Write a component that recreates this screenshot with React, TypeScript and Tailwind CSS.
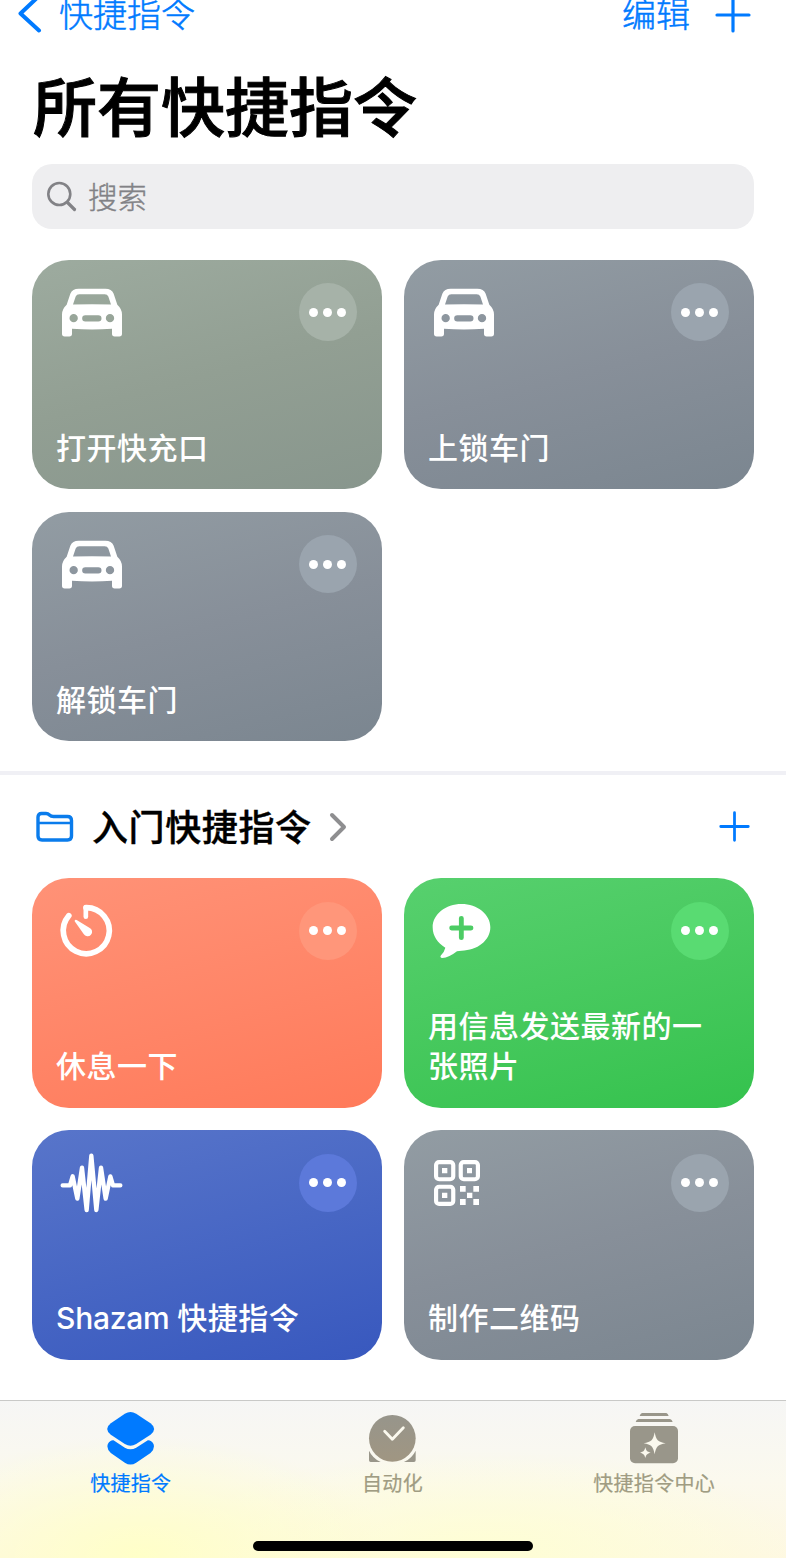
import type { ReactNode } from 'react';

type Shortcut = {
  app?: string;
  title: string;
  icon: ReactNode;
  background: string;
  badge: string;
};

const GRAY = 'bg-linear-165 from-[#929ca3] via-[#878f99] to-[#7b8690]';
const SAGE = 'bg-linear-165 from-[#9dab9f] via-[#929f93] to-[#88968d]';
const CORAL = 'bg-linear-165 from-[#ff9277] to-[#ff7a5a]';
const GREEN = 'bg-linear-165 from-[#57d06e] to-[#34c24d]';
const BLUE = 'bg-linear-165 from-[#5875ca] to-[#3858be]';

function CarIcon() {
  return (
    <svg viewBox="108 88.5 216 192" className="w-[72px] h-16" fill="white">
      <path
        fillRule="evenodd"
        d="M176 115H256Q275 115 281 130L292 163Q306 176 306 192V250Q306 258 298 258H284Q276 258 276 250V235Q216 239 156 235V250Q156 258 148 258H134Q126 258 126 250V192Q126 176 140 163L151 130Q157 115 176 115ZM159 162L167 138Q170 131 178 131H254Q262 131 265 138L273 162Q216 160 159 162ZM148.500 203a12.500 12.500 0 1 0 25 0a12.500 12.500 0 1 0 -25 0ZM257.500 203a12.500 12.500 0 1 0 25 0a12.500 12.500 0 1 0 -25 0ZM196 194H235a9.500 9.500 0 0 1 0 19H196a9.500 9.500 0 0 1 0 -19Z"
      />
    </svg>
  );
}

function TimerIcon() {
  return (
    <svg viewBox="168 414 216 192" className="w-[72px] h-16" fill="none" stroke="white" strokeLinecap="round">
      <path d="M258 443A69 69 0 1 1 206.500 467" strokeWidth="17" />
      <path d="M257.500 442V470" strokeWidth="14" />
      <path d="M224 484Q223 478 230 480L268 503A13.500 13.500 0 1 1 251 522Z" fill="white" stroke="none" />
    </svg>
  );
}

function MessageIcon() {
  return (
    <svg viewBox="84 114 216 192" className="w-[72px] h-16">
      <path
        fill="white"
        d="M184.500 132C232 132 271 163 271 202S232 272 184.500 272Q177 272 171 274Q147 293 127 294Q118 293 123 286Q133 276 136 263C113 250 98 228 98 202C98 163 137 132 184.500 132Z"
      />
      <path d="M184 175V233M155 204H213" stroke="#4ccc64" strokeWidth="14.500" strokeLinecap="round" />
    </svg>
  );
}

function WaveformIcon() {
  return (
    <svg viewBox="108 90 216 192" className="w-[72px] h-16" fill="none">
      <path
        d="M128 196H150L158 169L172 236L186 143L200 270L214 107L229 270L243 143L257 236L271 169L279 196H301"
        stroke="white"
        strokeWidth="13"
        strokeLinecap="round"
        strokeLinejoin="round"
      />
    </svg>
  );
}

function QrIcon() {
  return (
    <svg viewBox="84 90 216 192" className="w-[72px] h-16" fill="white">
      <g fill="none" stroke="white" strokeWidth="12.500">
        <rect x="108.250" y="126.250" width="51.500" height="51.500" rx="9" />
        <rect x="182.250" y="126.250" width="51.500" height="51.500" rx="9" />
        <rect x="108.250" y="200.250" width="51.500" height="51.500" rx="9" />
      </g>
      <path d="M126 144h16v16h-16zM201 144h15v16h-15zM126 218h16v16h-16zM180 198h17v17h-17zM220 198h17v17h-17zM201 218h16v16h-16zM180 237h17v18h-17zM220 237h17v18h-17z" />
    </svg>
  );
}

function PlusIcon({ className }: { className: string }) {
  return (
    <svg viewBox="0 0 36 36" className={className} fill="none" stroke="#007aff" strokeLinecap="round">
      <path d="M18 2V34M2 18H34" strokeWidth="3.200" />
    </svg>
  );
}

function ShortcutsTabIcon() {
  return (
    <svg viewBox="317.5 90 150 168" className="w-[50px] h-14" fill="#007aff">
      <path d="M374 101Q391 91 408 101L451 130Q473 147 451 164L408 192Q391 202 374 192L332 164Q310 147 332 130Z" />
      <path d="M340 181L374 203Q391 212 408 203L443 181Q453 180 460 192Q465 207 451 219L408 248Q391 259 374 248L332 219Q318 207 323 192Q330 180 340 181Z" />
    </svg>
  );
}

function AutomationTabIcon() {
  return (
    <svg viewBox="-56 90 150 168" className="w-[50px] h-14">
      <defs>
        <linearGradient id="automation" x1="0" y1="0" x2="0" y2="1">
          <stop offset="0" stopColor="#97958b" />
          <stop offset="1" stopColor="#a09682" />
        </linearGradient>
      </defs>
      <circle cx="20" cy="175" r="70" fill="url(#automation)" />
      <path d="M90 212V241Q90 246 85 246H55Q79 235 90 212ZM-50 212V241Q-50 246 -45 246H-15Q-39 235 -50 212Z" fill="#99968a" />
      <path d="M-3 154L20 178L53 143" fill="none" stroke="#fbf9ee" strokeWidth="8.500" strokeLinecap="round" strokeLinejoin="round" />
    </svg>
  );
}

function GalleryTabIcon() {
  return (
    <svg viewBox="730 90 150 168" className="w-[50px] h-14" fill="#99968a">
      <path d="M769 99H842Q847 100 849 108H762Q764 100 769 99ZM758 117H853Q859 118 861 126H750Q752 118 758 117Z" />
      <rect x="733" y="138" width="144" height="112" rx="15" />
      <path
        fill="#fbf9ee"
        d="M807 157C811 180 817 186 840 190C817 194 811 200 807 223C803 200 797 194 774 190C797 186 803 180 807 157ZM779 202C782 213 784 215 795 218C784 221 782 223 779 234C776 223 774 221 763 218C774 215 776 213 779 202Z"
      />
    </svg>
  );
}

const allShortcuts: Shortcut[] = [
  { title: '打开快充口', icon: <CarIcon />, background: SAGE, badge: 'bg-[#a6b2a8]' },
  { title: '上锁车门', icon: <CarIcon />, background: GRAY, badge: 'bg-[#9aa4ae]' },
  { title: '解锁车门', icon: <CarIcon />, background: GRAY, badge: 'bg-[#9aa4ae]' },
];

const starterShortcuts: Shortcut[] = [
  { title: '休息一下', icon: <TimerIcon />, background: CORAL, badge: 'bg-[#ff967a]' },
  { title: '用信息发送最新的一张照片', icon: <MessageIcon />, background: GREEN, badge: 'bg-[#59db72]' },
  { app: 'Shazam', title: '快捷指令', icon: <WaveformIcon />, background: BLUE, badge: 'bg-[#5c79da]' },
  { title: '制作二维码', icon: <QrIcon />, background: GRAY, badge: 'bg-[#9aa4ae]' },
];

const tabs = [
  { label: '快捷指令', icon: <ShortcutsTabIcon />, color: 'text-[#007aff]' },
  { label: '自动化', icon: <AutomationTabIcon />, color: 'text-[#a09c82]' },
  { label: '快捷指令中心', icon: <GalleryTabIcon />, color: 'text-[#a09c82]' },
];

function ShortcutCard({ app, title, icon, background, badge }: Shortcut) {
  return (
    <div className={`flex flex-col justify-between rounded-[37px] pl-6 pr-[25.5px] pb-[21.5px] ${background}`}>
      <div className="flex justify-between">
        <div className="pt-5">{icon}</div>
        <button className={`mt-[23.5px] flex size-[58px] items-center justify-center gap-[5px] rounded-full ${badge}`}>
          <span className="size-[9px] rounded-full bg-white" />
          <span className="size-[9px] rounded-full bg-white" />
          <span className="size-[9px] rounded-full bg-white" />
        </button>
      </div>
      <h3 className="w-[280px] text-[30px] leading-10 tracking-[0.5px] font-medium text-white">
        {app && <span className="tracking-[-0.25px]">{app} </span>}
        {title}
      </h3>
    </div>
  );
}

function ShortcutGrid({ items }: { items: Shortcut[] }) {
  return (
    <div className="grid grid-cols-2 auto-rows-[229.5px] gap-x-[22px] gap-y-[22.5px] px-8">
      {items.map((item) => (
        <ShortcutCard key={item.title} {...item} />
      ))}
    </div>
  );
}

export default function App() {
  return (
    <div className="flex h-[1558px] w-[786px] flex-col overflow-hidden bg-white font-['Inter','Noto_Sans_CJK_SC',sans-serif]">
      <header className="flex h-[30px] shrink-0 items-center justify-between pl-[17px] pr-[35px] text-[34px] leading-[30px] text-[#007aff]">
        <div className="flex items-center gap-[17px]">
          <svg viewBox="0 0 25 40" className="h-10 w-[25px]" fill="none">
            <path d="M22 1L3.500 18.500L22 35.500" stroke="#007aff" strokeWidth="4" strokeLinecap="round" strokeLinejoin="round" />
          </svg>
          <span className="font-light [-webkit-text-stroke:0.5px_#007aff]">快捷指令</span>
        </div>
        <div className="flex items-center gap-[25px]">
          <span className="font-light [-webkit-text-stroke:0.5px_#007aff]">编辑</span>
          <PlusIcon className="size-9" />
        </div>
      </header>

      <h1 className="mt-[38px] h-20 shrink-0 pl-[33px] text-[64px] leading-[80px] font-medium text-black [-webkit-text-stroke:1px_black]">
        所有快捷指令
      </h1>

      <div className="mx-8 mt-[16px] flex h-[65px] shrink-0 items-center rounded-[20px] bg-[#eeeef0] pl-[14px] text-[#828286]">
        <svg viewBox="0 0 32 32" className="size-8" fill="none" stroke="#828286" strokeLinecap="round">
          <circle cx="13.300" cy="13" r="11" strokeWidth="2.600" />
          <path d="M21.500 21.500L28.500 28.500" strokeWidth="3.200" />
        </svg>
        <span className="ml-[10px] pt-px text-[29.5px] font-light [-webkit-text-stroke:0.4px_#828286]">搜索</span>
      </div>

      <section className="mt-[30.5px] shrink-0">
        <ShortcutGrid items={allShortcuts} />
      </section>

      <div className="mt-[30px] h-1 shrink-0 bg-[#f0f0f5]" />

      <section className="shrink-0">
        <div className="flex h-[103px] items-center justify-between pl-[35px] pr-[36px]">
          <div className="flex items-center">
            <svg viewBox="0 0 40 32" className="h-8 w-10" fill="none" stroke="#0a7cec" strokeWidth="3.400">
              <path d="M3 6Q3 2.500 6.500 2.500H11Q13 2.500 14.500 4Q16 5.500 18.500 5.500H32.500Q36.500 5.500 36.500 9.500V25Q36.500 29 32.500 29H7Q3 29 3 25Z" />
              <path d="M3 12H36.500" strokeWidth="2.600" />
            </svg>
            <h2 className="ml-[17px] pt-0.5 text-[36px] tracking-[0.6px] font-medium text-black [-webkit-text-stroke:0.4px_black]">
              入门快捷指令
            </h2>
            <svg viewBox="0 0 20 30" className="ml-4 h-[30px] w-5" fill="none">
              <path d="M4 3L16 15L4 27" stroke="#8e8e90" strokeWidth="4" strokeLinecap="round" strokeLinejoin="round" />
            </svg>
          </div>
          <PlusIcon className="size-[31px]" />
        </div>
        <ShortcutGrid items={starterShortcuts} />
      </section>

      <nav className="relative mt-auto flex h-[158px] shrink-0 flex-col items-center border-t border-[#c9c9c7] bg-linear-to-b from-[#f6f6f5] via-[#fbf9ee] to-[#fef8e2]">
        {/* warm glow behind the translucent bar */}
        <div className="absolute inset-0 bg-[radial-gradient(ellipse_250px_120px_at_140px_155px,#ffffc8,transparent),radial-gradient(ellipse_330px_100px_at_480px_150px,#fefed4,transparent)]" />
        <div className="relative grid w-full grid-cols-3 pr-px pt-[9px]">
          {tabs.map((tab) => (
            <div key={tab.label} className={`flex flex-col items-center ${tab.color}`}>
              {tab.icon}
              <span className="mt-[3px] text-[20px] leading-[30px] tracking-[0.3px] [-webkit-text-stroke:0.2px_currentColor]">
                {tab.label}
              </span>
            </div>
          ))}
        </div>
        <div className="relative mt-auto mb-[7px] h-[10px] w-[280px] rounded-full bg-black" />
      </nav>
    </div>
  );
}
